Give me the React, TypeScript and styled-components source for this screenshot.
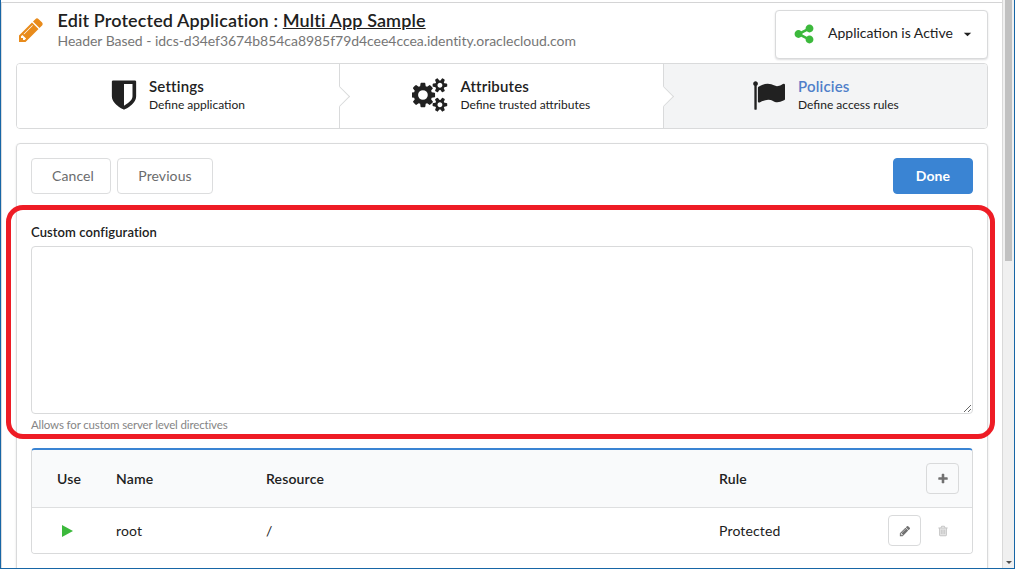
import React from "react";
import styled, { createGlobalStyle } from "styled-components";

const Global = createGlobalStyle`
  * { box-sizing: border-box; }
  body { margin: 0; background: #fff; }
  body, button, textarea { font-family: Lato, "Liberation Sans", sans-serif; }
`;

const ICONS = {
  pencil:
    "M491 1536l91-91-235-235-91 91v107h128v128h107zm523-928q0-22-22-22-10 0-17 7l-542 542q-7 7-7 17 0 22 22 22 10 0 17-7l542-542q7-7 7-17zm-54-192l416 416-832 832h-416v-416zm683 96q0 53-37 90l-166 166-416-416 166-165q36-38 90-38 53 0 91 38l235 234q37 39 37 91z",
  shield:
    "M1344 960v-640h-448v1137q119-63 213-137 235-184 235-360zm192-768v768q0 86-33.5 170.5t-83 150-118 127.5-126.5 103-121 77.5-89.5 49.5-42.5 20q-12 6-26 6t-26-6q-16-7-42.5-20t-89.5-49.5-121-77.5-126.5-103-118-127.5-83-150-33.5-170.5v-768q0-26 19-45t45-19h1152q26 0 45 19t19 45z",
  cogs:
    "M832 896q0-106-75-181t-181-75-181 75-75 181 75 181 181 75 181-75 75-181zm768 512q0-52-38-90t-90-38-90 38-38 90q0 53 37.5 90.5t90.5 37.5 90.5-37.5 37.5-90.5zm0-1024q0-52-38-90t-90-38-90 38-38 90q0 53 37.5 90.5t90.5 37.5 90.5-37.5 37.5-90.5zm-384 421v185q0 10-7 19.5t-16 10.5l-155 24q-11 35-32 76 34 48 90 115 7 11 7 20 0 12-7 19-23 30-82.5 89.5t-78.5 59.5q-11 0-21-7l-115-90q-37 19-77 31-11 108-23 155-7 24-30 24h-186q-11 0-20-7.5t-10-17.5l-23-153q-34-10-75-31l-118 89q-7 7-20 7-11 0-21-8-144-133-144-160 0-9 7-19 10-14 41-53t47-61q-23-44-35-82l-152-24q-10-1-17-9.5t-7-19.5v-185q0-10 7-19.5t16-10.5l155-24q11-35 32-76-34-48-90-115-7-11-7-20 0-12 7-20 22-30 82-89t79-59q11 0 21 7l115 90q34-18 77-32 11-108 23-154 7-24 30-24h186q11 0 20 7.5t10 17.5l23 153q34 10 75 31l118-89q8-7 20-7 11 0 21 8 144 133 144 160 0 8-7 19-12 16-42 54t-45 60q23 48 34 82l152 23q10 2 17 10.5t7 19.5zm640 533v140q0 16-149 31-12 27-30 52 51 113 51 138 0 4-4 7-122 71-124 71-8 0-46-47t-52-68q-20 2-30 2t-30-2q-14 21-52 68t-46 47q-2 0-124-71-4-3-4-7 0-25 51-138-18-25-30-52-149-15-149-31v-140q0-16 149-31 13-29 30-52-51-113-51-138 0-4 4-7 4-2 35-20t59-34 30-16q8 0 46 46.5t52 67.5q20-2 30-2t30 2q51-71 92-112l6-2q4 0 124 70 4 3 4 7 0 25-51 138 17 23 30 52 149 15 149 31zm0-1024v140q0 16-149 31-12 27-30 52 51 113 51 138 0 4-4 7-122 71-124 71-8 0-46-47t-52-68q-20 2-30 2t-30-2q-14 21-52 68t-46 47q-2 0-124-71-4-3-4-7 0-25 51-138-18-25-30-52-149-15-149-31v-140q0-16 149-31 13-29 30-52-51-113-51-138 0-4 4-7 4-2 35-20t59-34 30-16q8 0 46 46.5t52 67.5q20-2 30-2t30 2q51-71 92-112l6-2q4 0 124 70 4 3 4 7 0 25-51 138 17 23 30 52 149 15 149 31z",
  flag:
    "M320 256q0 72-64 110v1266q0 13-9.5 22.5t-22.5 9.5h-64q-13 0-22.5-9.5t-9.5-22.5v-1266q-64-38-64-110 0-53 37.5-90.5t90.5-37.5 90.5 37.5 37.5 90.5zm1472 64v763q0 25-12.5 38.5t-39.5 27.5q-215 116-369 116-61 0-123.5-22t-108.5-48-115.5-48-142.5-22q-192 0-464 146-17 9-33 9-26 0-45-19t-19-45v-742q0-32 31-55 21-14 79-43 236-120 421-120 107 0 200 29t219 88q38 19 88 19 54 0 117.5-21t110-47 88-47 54.5-21q26 0 45 19t19 45z",
  share:
    "M1344 1024q133 0 226.5 93.5t93.5 226.5-93.5 226.5-226.5 93.5-226.5-93.5-93.5-226.5q0-12 2-34l-360-180q-92 86-218 86-133 0-226.5-93.5t-93.5-226.5 93.5-226.5 226.5-93.5q126 0 218 86l360-180q-2-22-2-34 0-133 93.5-226.5t226.5-93.5 226.5 93.5 93.5 226.5-93.5 226.5-226.5 93.5q-126 0-218-86l-360 180q2 22 2 34t-2 34l360 180q92-86 218-86z",
  plus:
    "M1600 736v192q0 40-28 68t-68 28h-416v416q0 40-28 68t-68 28h-192q-40 0-68-28t-28-68v-416h-416q-40 0-68-28t-28-68v-192q0-40 28-68t68-28h416v-416q0-40 28-68t68-28h192q40 0 68 28t28 68v416h416q40 0 68 28t28 68z",
  trash:
    "M704 736v576q0 14-9 23t-23 9h-64q-14 0-23-9t-9-23v-576q0-14 9-23t23-9h64q14 0 23 9t9 23zm256 0v576q0 14-9 23t-23 9h-64q-14 0-23-9t-9-23v-576q0-14 9-23t23-9h64q14 0 23 9t9 23zm256 0v576q0 14-9 23t-23 9h-64q-14 0-23-9t-9-23v-576q0-14 9-23t23-9h64q14 0 23 9t9 23zm128 724v-948h-896v948q0 22 7 40.5t14.5 27 10.5 8.5h832q3 0 10.5-8.5t14.5-27 7-40.5zm-672-1076h448l-48-117q-7-9-17-11h-317q-10 2-17 11zm928 32v64q0 14-9 23t-23 9h-96v948q0 83-47 143.5t-113 60.5h-832q-66 0-113-58.5t-47-141.5v-952h-96q-14 0-23-9t-9-23v-64q0-14 9-23t23-9h309l70-167q15-37 54-63t79-26h320q40 0 79 26t54 63l70 167h309q14 0 23 9t9 23z",
  play: "M256 128L1664 896L256 1664Z",
  caret: "M384 640L1408 640L896 1152Z",
};

const Svg = styled.svg`
  display: block;
  flex: none;
  fill: currentColor;
`;

function Icon({ name, size, wide }: { name: keyof typeof ICONS; size: number; wide?: boolean }) {
  const units = wide ? 1920 : 1792;
  return (
    <Svg width={(size * units) / 1792} height={size} viewBox={`0 0 ${units} 1792`} aria-hidden>
      {name === "trash" && <rect x="400" y="470" width="990" height="1100" opacity="0.45" />}
      <path d={ICONS[name]} />
    </Svg>
  );
}

const Window = styled.div`
  position: relative;
  display: flex;
  width: 1015px;
  height: 569px;
  overflow: hidden;
  border: solid #1766a6;
  border-width: 0 1px 1px 1px;
`;

const Page = styled.main`
  flex: 1;
  min-width: 0;
  margin-top: 2px;
  border-top: 1px solid #d4d4d5;
  border-left: 1px solid #dcdcdd;
  padding: 0 14px;
  color: #212121;
`;

const Scrollbar = styled.div`
  width: 12px;
  flex: none;
  display: flex;
  flex-direction: column;
  align-items: center;
  justify-content: space-between;
  background: #f0f0f0;
  border-left: 1px solid #d9d9d9;
  padding-bottom: 4px;
`;

const Thumb = styled.div`
  width: 7px;
  height: 261px;
  background: #c1c1c1;
`;

const DownArrow = styled.div`
  border: solid transparent;
  border-width: 3px 3px 0;
  border-top-color: #505050;
`;

const Header = styled.header`
  display: flex;
  height: 60px;
  align-items: flex-start;
`;

const PencilSlot = styled.div`
  color: #e88b1c;
  padding: 12.5px 0 0 1px;
`;

const Heading = styled.div`
  flex: 1;
  padding: 6px 0 0 12.5px;
`;

const Title = styled.h1`
  margin: 0;
  font-size: 18px;
  line-height: 23px;
  padding-bottom: 1px;
  font-weight: 600;
  letter-spacing: 0.12px;
  white-space: nowrap;
`;

const Subtitle = styled.div`
  font-size: 14px;
  line-height: 16px;
  letter-spacing: -0.04px;
  color: #767676;
  white-space: nowrap;
`;

const Status = styled.button`
  display: flex;
  align-items: center;
  width: 213px;
  height: 49px;
  margin: 7px 0 0;
  padding: 0 13px 1px 17px;
  border: 1px solid #d9dadb;
  border-radius: 4px;
  background: #fff;
  box-shadow: 0 1px 2px rgba(34, 36, 38, 0.15);
  color: #212121;
  font-size: 14px;
`;

const Green = styled.span`
  color: #3cb93c;
`;

const StatusText = styled.span`
  flex: 1;
  text-align: left;
  white-space: nowrap;
  padding-left: 13px;
  padding-bottom: 3px;
`;

const Steps = styled.nav`
  display: grid;
  grid-template-columns: 323px 324px 323px;
  height: 66px;
  border: 1px solid #d9dadb;
  border-radius: 4px;
  overflow: hidden;
`;

const Step = styled.div<{ $active?: boolean; $left: number }>`
  position: relative;
  display: flex;
  align-items: center;
  padding-left: ${(p) => p.$left}px;
  padding-bottom: 2px;
  background: ${(p) => (p.$active ? "#f3f4f5" : "#fff")};
  border-right: ${(p) => (p.$active ? "0" : "1px solid #d9dadb")};

  &::after {
    content: "";
    display: ${(p) => (p.$active ? "none" : "block")};
    position: absolute;
    z-index: 1;
    top: 25px;
    right: -8px;
    width: 14px;
    height: 14px;
    background: #fff;
    border: solid #d9dadb;
    border-width: 0 1px 1px 0;
    transform: rotate(-45deg);
  }
`;

const StepText = styled.div<{ $gap: number }>`
  padding-left: ${(p) => p.$gap}px;
  white-space: nowrap;
`;

const StepTitle = styled.div<{ $active?: boolean }>`
  font-size: 15px;
  line-height: 18px;
  font-weight: 600;
  letter-spacing: 0.18px;
  color: ${(p) => (p.$active ? "#4f7fc9" : "#212121")};
`;

const StepNote = styled.div`
  font-size: 12px;
  line-height: 19px;
`;

const Panel = styled.section`
  margin-top: 14px;
  height: 440px;
  padding: 14px;
  border: 1px solid #d9dadb;
  border-radius: 4px;
  box-shadow: 0 1px 2px rgba(34, 36, 38, 0.15);
`;

const Toolbar = styled.div`
  display: flex;
  gap: 6px;
  height: 36px;
`;

const Button = styled.button<{ $primary?: boolean; $width: number; $shift?: number }>`
  width: ${(p) => p.$width}px;
  height: 36px;
  padding: 0 0 1px ${(p) => p.$shift ?? 0}px;
  border: 1px solid ${(p) => (p.$primary ? "#3a84d3" : "#dcddde")};
  border-radius: 4px;
  background: ${(p) => (p.$primary ? "#3a84d3" : "#fff")};
  color: ${(p) => (p.$primary ? "#fff" : "#6b6c6d")};
  font-size: 14px;
  letter-spacing: 0.08px;
  font-weight: ${(p) => (p.$primary ? 700 : 400)};
  margin-left: ${(p) => (p.$primary ? "auto" : "0")};
`;

const Label = styled.label`
  display: block;
  margin-top: 29px;
  font-size: 13px;
  line-height: 18px;
  font-weight: 600;
  letter-spacing: 0.09px;
`;

const Config = styled.textarea`
  display: block;
  width: 942px;
  height: 168px;
  margin-top: 5px;
  border: 1px solid #d9dadb;
  border-radius: 4px;
  background: #fff;
`;

const Hint = styled.div`
  margin-top: 2px;
  font-size: 11.5px;
  line-height: 18px;
  letter-spacing: -0.14px;
  color: #858585;
`;

const Table = styled.div`
  margin-top: 14px;
  height: 106px;
  border: 1px solid #d9dadb;
  border-top: 2px solid #3a84d3;
  border-radius: 4px;
  overflow: hidden;
  font-size: 14px;
`;

const Row = styled.div<{ $head?: boolean }>`
  display: grid;
  grid-template-columns: 59px 150px 453px 169px auto;
  align-items: center;
  padding-left: 25px;
  height: ${(p) => (p.$head ? "58px" : "45px")};
  background: ${(p) => (p.$head ? "#f9fafb" : "#fff")};
  border-bottom: ${(p) => (p.$head ? "1px solid #dedfe0" : "0")};
  font-weight: ${(p) => (p.$head ? 600 : 400)};
  letter-spacing: 0.15px;
`;

const PlayCell = styled.div`
  padding-left: 3px;
  color: #3cb93c;
`;

const Actions = styled.div`
  display: flex;
  gap: 5px;
`;

const IconButton = styled.button<{ $plain?: boolean; $last?: boolean }>`
  display: flex;
  align-items: center;
  justify-content: center;
  width: 33px;
  height: 31px;
  padding: 0;
  margin-left: ${(p) => (p.$last ? "38px" : "0")};
  border: 1px solid ${(p) => (p.$plain ? "transparent" : "#d9dadb")};
  border-radius: 4px;
  background: transparent;
  color: ${(p) => (p.$plain ? "#c4c4c4" : "#717171")};
`;

const Callout = styled.div`
  position: absolute;
  left: 5px;
  top: 205px;
  width: 989px;
  height: 234px;
  border: 5px solid #ee1c25;
  border-radius: 17px;
  pointer-events: none;
`;

export default function App() {
  return (
    <>
      <Global />
      <Window>
        <Page>
          <Header>
            <PencilSlot>
              <Icon name="pencil" size={28} />
            </PencilSlot>
            <Heading>
              <Title>
                Edit Protected Application : <u>Multi App Sample</u>
              </Title>
              <Subtitle>Header Based - idcs-d34ef3674b854ca8985f79d4cee4ccea.identity.oraclecloud.com</Subtitle>
            </Heading>
            <Status>
              <Green>
                <Icon name="share" size={22} />
              </Green>
              <StatusText>Application is Active</StatusText>
              <Icon name="caret" size={13} />
            </Status>
          </Header>

          <Steps>
            <Step $left={89.5}>
              <Icon name="shield" size={34} />
              <StepText $gap={8.5}>
                <StepTitle>Settings</StepTitle>
                <StepNote>Define application</StepNote>
              </StepText>
            </Step>
            <Step $left={71.5}>
              <Icon name="cogs" size={34} wide />
              <StepText $gap={12.5}>
                <StepTitle>Attributes</StepTitle>
                <StepNote>Define trusted attributes</StepNote>
              </StepText>
            </Step>
            <Step $active $left={88}>
              <Icon name="flag" size={33} />
              <StepText $gap={13}>
                <StepTitle $active>Policies</StepTitle>
                <StepNote>Define access rules</StepNote>
              </StepText>
            </Step>
          </Steps>

          <Panel>
            <Toolbar>
              <Button $width={80} $shift={4}>Cancel</Button>
              <Button $width={96}>Previous</Button>
              <Button $primary $width={80}>Done</Button>
            </Toolbar>
            <Label htmlFor="config">Custom configuration</Label>
            <Config id="config" />
            <Hint>Allows for custom server level directives</Hint>
            <Table>
              <Row $head>
                <span>Use</span>
                <span>Name</span>
                <span>Resource</span>
                <span>Rule</span>
                <Actions>
                  <IconButton $last aria-label="Add">
                    <Icon name="plus" size={12} />
                  </IconButton>
                </Actions>
              </Row>
              <Row>
                <PlayCell>
                  <Icon name="play" size={14} />
                </PlayCell>
                <span>root</span>
                <span>/</span>
                <span>Protected</span>
                <Actions>
                  <IconButton aria-label="Edit">
                    <Icon name="pencil" size={12} />
                  </IconButton>
                  <IconButton $plain aria-label="Delete">
                    <Icon name="trash" size={12} />
                  </IconButton>
                </Actions>
              </Row>
            </Table>
          </Panel>
        </Page>
        <Scrollbar>
          <Thumb />
          <DownArrow />
        </Scrollbar>
        <Callout />
      </Window>
    </>
  );
}
